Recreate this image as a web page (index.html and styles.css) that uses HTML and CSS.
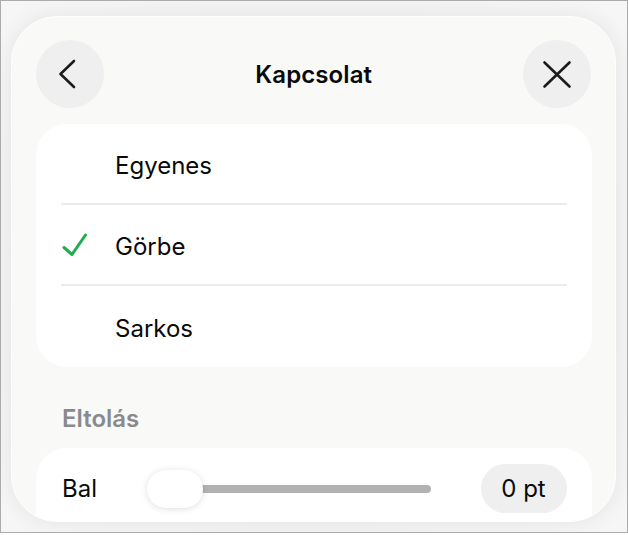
FILE: index.html
```html
<!DOCTYPE html>
<html lang="hu">
<head>
<meta charset="utf-8">
<title>Kapcsolat</title>
<link rel="stylesheet" href="styles.css">
</head>
<body>
<div class="frame">
  <div class="panel">
    <header class="header">
      <button class="round-btn" aria-label="Vissza">
        <svg width="68" height="68" viewBox="0 0 68 68"><path d="M38 21 L24.5 34 L38 47" fill="none" stroke="#1c1c1e" stroke-width="2.6" stroke-linecap="round" stroke-linejoin="round"/></svg>
      </button>
      <h1 class="title">Kapcsolat</h1>
      <button class="round-btn" aria-label="Bezárás">
        <svg width="68" height="68" viewBox="0 0 68 68"><path d="M21.5 22.5 L46.5 46.5 M46.5 22.5 L21.5 46.5" fill="none" stroke="#1c1c1e" stroke-width="2.6" stroke-linecap="round"/></svg>
      </button>
    </header>

    <div class="card list">
      <div class="row">
        <span class="check"></span>
        <span class="row-label">Egyenes</span>
      </div>
      <div class="row">
        <span class="check">
          <svg width="26" height="24" viewBox="0 0 26 24"><path d="M2 14.5 L10 21.5 L23.5 2" fill="none" stroke="#1fad52" stroke-width="3" stroke-linecap="round" stroke-linejoin="round"/></svg>
        </span>
        <span class="row-label">Görbe</span>
      </div>
      <div class="row">
        <span class="check"></span>
        <span class="row-label">Sarkos</span>
      </div>
    </div>

    <div class="section-label">Eltolás</div>

    <div class="card slider-card">
      <div class="slider-row">
        <span class="slider-label">Bal</span>
        <div class="slider">
          <div class="track"></div>
          <div class="thumb"></div>
        </div>
        <span class="value-pill">0 pt</span>
      </div>
    </div>
  </div>
</div>
</body>
</html>
```

FILE: styles.css
```css
* { box-sizing: border-box; }
html, body {
  margin: 0;
  padding: 0;
  background: #ffffff;
}
body {
  font-family: "Inter", "Roboto", "Liberation Sans", sans-serif;
  color: #0a0a0a;
}
.frame {
  width: 628px;
  height: 533px;
  border: 1px solid #ababab;
  background: radial-gradient(ellipse at center, #e9e9e9 0%, #f3f3f3 60%, #f6f6f6 100%);
  padding: 15px 0 0 10px;
  overflow: hidden;
}
.panel {
  width: 605px;
  height: 506px;
  background: #f9f9f8;
  border-radius: 46px;
  border: 1.5px solid #ffffff;
  box-shadow: 0 0 22px rgba(0, 0, 0, 0.07);
  padding: 23px 23.5px 0 24px;
  overflow: hidden;
}
.header {
  display: flex;
  align-items: center;
  justify-content: space-between;
  height: 68px;
}
.round-btn {
  width: 68px;
  height: 68px;
  border-radius: 50%;
  border: none;
  padding: 0;
  background: #efefef;
  display: flex;
  align-items: center;
  justify-content: center;
}
.round-btn svg { display: block; }
.title {
  margin: 0;
  font-size: 24px;
  font-weight: 600;
  letter-spacing: 0.1px;
  color: #0a0a0a;
}
.card {
  background: #ffffff;
  border-radius: 31px;
}
.list {
  margin-top: 16px;
  padding: 0 25px;
}
.row {
  height: 81px;
  display: flex;
  align-items: center;
  border-bottom: 2px solid #ebebeb;
}
.row:last-child { border-bottom: none; }
.check {
  width: 54px;
  display: flex;
  align-items: center;
  padding-left: 1px;
  padding-top: 1px;
}
.check svg { display: block; }
.row-label {
  font-size: 24px;
  font-weight: 400;
  padding-top: 3px;
}
.section-label {
  margin: 38px 0 15px 26px;
  height: 28px;
  line-height: 28px;
  font-size: 24px;
  font-weight: 600;
  color: #8a8a8e;
}
.slider-card {
  height: 120px;
  padding: 16px 25px 0 26px;
}
.slider-row {
  display: flex;
  align-items: center;
  height: 49px;
}
.slider-label {
  width: 85px;
  font-size: 24px;
}
.slider {
  position: relative;
  width: 284px;
  height: 38px;
  display: flex;
  align-items: center;
}
.track {
  margin-left: 14px;
  flex: 1;
  height: 8px;
  border-radius: 4px;
  background: #b2b2b2;
}
.thumb {
  position: absolute;
  left: 0;
  top: 0;
  width: 56px;
  height: 38px;
  border-radius: 19px;
  background: #ffffff;
  box-shadow: 0 1px 7px rgba(0, 0, 0, 0.13);
}
.value-pill {
  margin-left: auto;
  width: 86px;
  height: 49px;
  border-radius: 25px;
  background: #efeff0;
  display: flex;
  align-items: center;
  justify-content: center;
  font-size: 24px;
}
```
